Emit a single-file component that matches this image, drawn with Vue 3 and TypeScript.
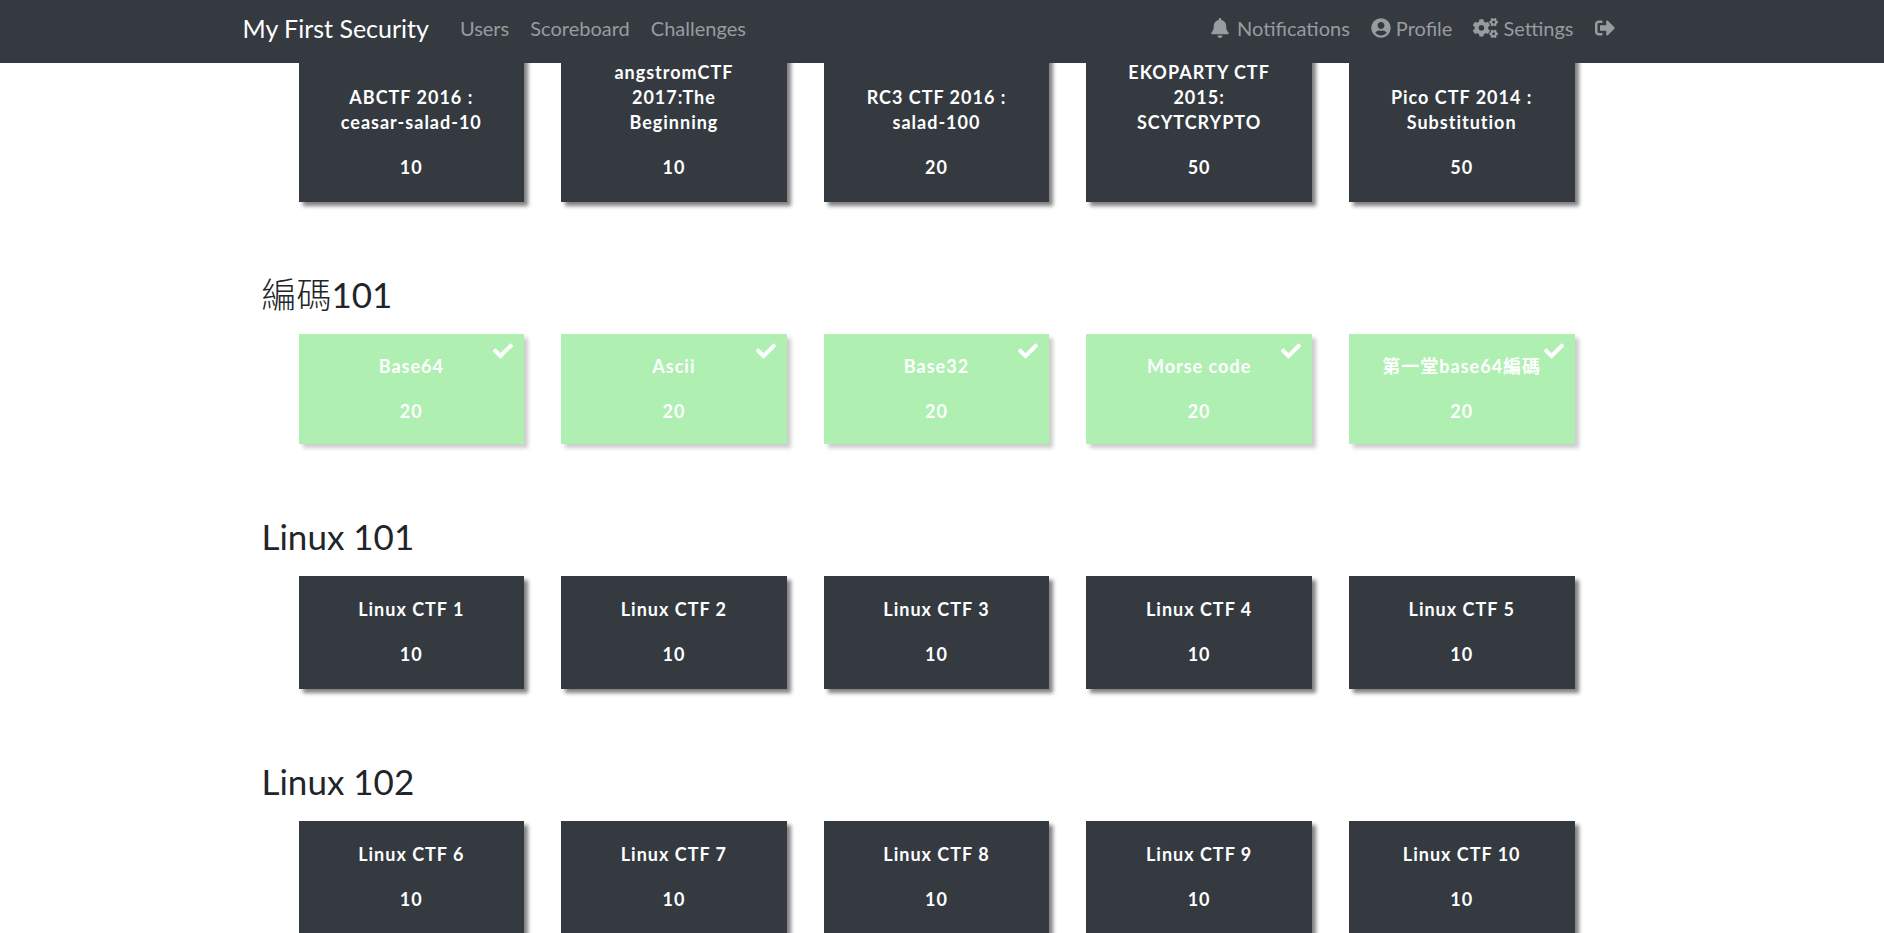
<script setup lang="ts">
interface Challenge {
  name: string
  value: number
  solved?: boolean
}

interface Category {
  cjk?: string
  title: string
  challenges: Challenge[]
}

const icons = {
  bell: 'M224 512c35.32 0 63.97-28.65 63.97-64H160.03c0 35.35 28.65 64 63.97 64zm215.39-149.71c-19.32-20.76-55.47-51.99-55.47-154.29 0-77.7-54.48-139.9-127.94-155.16V32c0-17.67-14.32-32-31.98-32s-31.98 14.33-31.98 32v20.84C118.56 68.1 64.08 130.3 64.08 208c0 102.3-36.15 133.53-55.47 154.29-6 6.45-8.66 14.16-8.61 21.71.11 16.4 12.98 32 32.1 32h383.8c19.12 0 32-15.6 32.1-32 .05-7.55-2.61-15.27-8.61-21.71z',
  user: 'M248 8C111 8 0 119 0 256s111 248 248 248 248-111 248-248S385 8 248 8zm0 96c48.6 0 88 39.4 88 88s-39.4 88-88 88-88-39.4-88-88 39.4-88 88-88zm0 344c-58.7 0-111.3-26.6-146.5-68.2 18.8-35.4 55.6-59.8 98.5-59.8 2.4 0 4.8.4 7.1 1.1 13 4.2 26.6 6.9 40.9 6.9 14.3 0 28-2.7 40.9-6.9 2.3-.7 4.7-1.1 7.1-1.1 42.9 0 79.7 24.4 98.5 59.8C359.3 421.4 306.7 448 248 448z',
  cogs: 'M512.1 191l-8.2 14.3c-3 5.3-9.4 7.5-15.1 5.4-11.8-4.4-22.6-10.7-32.1-18.6-4.6-3.8-5.8-10.5-2.8-15.7l8.2-14.3c-6.9-8-12.3-17.3-15.9-27.4h-16.5c-6 0-11.2-4.3-12.2-10.3-2-12-2.1-24.6 0-37.1 1-6 6.2-10.4 12.2-10.4h16.5c3.6-10.1 9-19.4 15.9-27.4l-8.2-14.3c-3-5.2-1.9-11.9 2.8-15.7 9.5-7.9 20.4-14.2 32.1-18.6 5.7-2.1 12.1.1 15.1 5.4l8.2 14.3c10.5-1.9 21.2-1.9 31.7 0L552 6.3c3-5.3 9.4-7.5 15.1-5.4 11.8 4.4 22.6 10.7 32.1 18.6 4.6 3.8 5.8 10.5 2.8 15.7l-8.2 14.3c6.9 8 12.3 17.3 15.9 27.4h16.5c6 0 11.2 4.3 12.2 10.3 2 12 2.1 24.6 0 37.1-1 6-6.2 10.4-12.2 10.4h-16.5c-3.6 10.1-9 19.4-15.9 27.4l8.2 14.3c3 5.2 1.9 11.9-2.8 15.7-9.5 7.9-20.4 14.2-32.1 18.6-5.7 2.1-12.1-.1-15.1-5.4l-8.2-14.3c-10.4 1.9-21.2 1.9-31.7 0zm-10.5-58.8c38.5 29.6 82.4-14.3 52.8-52.8-38.5-29.7-82.4 14.3-52.8 52.8zM386.3 286.1l33.7 16.8c10.1 5.8 14.5 18.1 10.5 29.1-8.9 24.2-26.4 46.4-42.6 65.8-7.4 8.9-20.2 11.1-30.3 5.3l-29.1-16.8c-16 13.7-34.6 24.6-54.9 31.7v33.6c0 11.6-8.3 21.6-19.7 23.6-24.6 4.2-50.4 4.4-75.9 0-11.5-2-20-11.9-20-23.6V418c-20.3-7.2-38.9-18-54.9-31.7L74 403c-10 5.8-22.9 3.6-30.3-5.3-16.2-19.4-33.3-41.6-42.2-65.7-4-10.9.4-23.2 10.5-29.1l33.3-16.8c-3.9-20.9-3.9-42.4 0-63.4L12 205.8c-10.1-5.8-14.6-18.1-10.5-29 8.9-24.2 26-46.4 42.2-65.8 7.4-8.9 20.2-11.1 30.3-5.3l29.1 16.8c16-13.7 34.6-24.6 54.9-31.7V57.1c0-11.5 8.2-21.5 19.6-23.5 24.6-4.2 50.5-4.4 76-.1 11.5 2 20 11.9 20 23.6v33.6c20.3 7.2 38.9 18 54.9 31.7l29.1-16.8c10-5.8 22.9-3.6 30.3 5.3 16.2 19.4 33.2 41.6 42.1 65.8 4 10.9.1 23.2-10 29.1l-33.7 16.8c3.9 21 3.9 42.5 0 63.5zm-117.6 21.1c59.2-77-28.7-164.9-105.7-105.7-59.2 77 28.7 164.9 105.7 105.7zm243.4 182.7l-8.2 14.3c-3 5.3-9.4 7.5-15.1 5.4-11.8-4.4-22.6-10.7-32.1-18.6-4.6-3.8-5.8-10.5-2.8-15.7l8.2-14.3c-6.9-8-12.3-17.3-15.9-27.4h-16.5c-6 0-11.2-4.3-12.2-10.3-2-12-2.1-24.6 0-37.1 1-6 6.2-10.4 12.2-10.4h16.5c3.6-10.1 9-19.4 15.9-27.4l-8.2-14.3c-3-5.2-1.9-11.9 2.8-15.7 9.5-7.9 20.4-14.2 32.1-18.6 5.7-2.1 12.1.1 15.1 5.4l8.2 14.3c10.5-1.9 21.2-1.9 31.7 0l8.2-14.3c3-5.3 9.4-7.5 15.1-5.4 11.8 4.4 22.6 10.7 32.1 18.6 4.6 3.8 5.8 10.5 2.8 15.7l-8.2 14.3c6.9 8 12.3 17.3 15.9 27.4h16.5c6 0 11.2 4.3 12.2 10.3 2 12 2.1 24.6 0 37.1-1 6-6.2 10.4-12.2 10.4h-16.5c-3.6 10.1-9 19.4-15.9 27.4l8.2 14.3c3 5.2 1.9 11.9-2.8 15.7-9.5 7.9-20.4 14.2-32.1 18.6-5.7 2.1-12.1-.1-15.1-5.4l-8.2-14.3c-10.4 1.9-21.2 1.9-31.7 0zM501.6 431c38.5 29.6 82.4-14.3 52.8-52.8-38.5-29.6-82.4 14.3-52.8 52.8z',
  signOut: 'M497 273L329 441c-15 15-41 4.5-41-17v-96H152c-13.3 0-24-10.7-24-24v-96c0-13.3 10.7-24 24-24h136V88c0-21.4 25.9-32 41-17l168 168c9.3 9.4 9.3 24.6 0 34zM192 436v-40c0-6.6-5.4-12-12-12H96c-17.7 0-32-14.3-32-32V160c0-17.7 14.3-32 32-32h84c6.6 0 12-5.4 12-12V76c0-6.6-5.4-12-12-12H96c-53 0-96 43-96 96v192c0 53 43 96 96 96h84c6.6 0 12-5.4 12-12z',
  check: 'M173.898 439.404l-166.4-166.4c-9.997-9.997-9.997-26.206 0-36.204l36.203-36.204c9.997-9.998 26.207-9.998 36.204 0L192 312.69 432.095 72.596c9.997-9.997 26.207-9.997 36.204 0l36.203 36.204c9.997 9.997 9.997 26.206 0 36.204l-294.4 294.401c-9.998 9.997-26.207 9.997-36.204-.001z',
}

const pages = ['Users', 'Scoreboard', 'Challenges']

const numbered = (from: number): Challenge[] =>
  Array.from({ length: 5 }, (_, i) => ({ name: `Linux CTF ${from + i}`, value: 10 }))

const crypto: Challenge[] = [
  { name: 'ABCTF 2016 : ceasar-salad-10', value: 10 },
  { name: 'angstromCTF 2017:The Beginning', value: 10 },
  { name: 'RC3 CTF 2016 : salad-100', value: 20 },
  { name: 'EKOPARTY CTF 2015: SCYTCRYPTO', value: 50 },
  { name: 'Pico CTF 2014 : Substitution', value: 50 },
]

const categories: Category[] = [
  {
    cjk: '編碼',
    title: '101',
    challenges: ['Base64', 'Ascii', 'Base32', 'Morse code', '第一堂base64編碼'].map((name) => ({
      name,
      value: 20,
      solved: true,
    })),
  },
  { title: 'Linux 101', challenges: numbered(1) },
  { title: 'Linux 102', challenges: numbered(6) },
]
</script>

<template>
  <div class="page">
    <header class="navbar">
      <nav class="container bar">
        <a class="brand" href="#">My First Security</a>
        <a v-for="page in pages" :key="page" class="link" href="#">{{ page }}</a>
        <span class="spacer"></span>
        <a class="link" href="#">
          <svg class="icon bell" viewBox="0 0 448 512" aria-hidden="true"><path :d="icons.bell" /></svg>Notifications
        </a>
        <a class="link" href="#">
          <svg class="icon user" viewBox="0 0 496 512" aria-hidden="true"><path :d="icons.user" /></svg>Profile
        </a>
        <a class="link" href="#">
          <svg class="icon cogs" viewBox="0 0 640 512" aria-hidden="true"><path :d="icons.cogs" /></svg>Settings
        </a>
        <a class="link" href="#" aria-label="Logout">
          <svg class="icon out" viewBox="0 0 512 512" aria-hidden="true"><path :d="icons.signOut" /></svg>
        </a>
      </nav>
    </header>

    <main class="container board">
      <section class="category">
        <div class="cards">
          <button v-for="c in crypto" :key="c.name" type="button" class="card">
            <span class="name">{{ c.name }}</span>
            <span>{{ c.value }}</span>
          </button>
        </div>
      </section>

      <section v-for="cat in categories" :key="cat.title" class="category">
        <h3 class="title"><span v-if="cat.cjk" class="cjk">{{ cat.cjk }}</span>{{ cat.title }}</h3>
        <div class="cards">
          <button
            v-for="c in cat.challenges"
            :key="c.name"
            type="button"
            class="card"
            :class="{ solved: c.solved }"
          >
            <svg v-if="c.solved" class="check" viewBox="0 0 512 512" aria-hidden="true">
              <path :d="icons.check" />
            </svg>
            <span class="name">{{ c.name }}</span>
            <span>{{ c.value }}</span>
          </button>
        </div>
      </section>
    </main>
  </div>
</template>

<style>
body {
  margin: 0;
  background: #fff;
}
</style>

<style scoped>
.page {
  box-sizing: border-box;
  height: 100vh;
  padding-right: 12px;
  overflow-y: auto;
  scrollbar-width: none;
  font-family: Lato, 'Noto Sans CJK TC', sans-serif;
  font-size: 20px;
  line-height: 30px;
  color: #212529;
}

.navbar {
  position: fixed;
  top: 0;
  left: 0;
  right: 0;
  z-index: 10;
  height: 63px;
  padding-right: 12px;
  background: #343a40;
}

.container {
  box-sizing: border-box;
  max-width: 1425px;
  margin: 0 auto;
}

.bar {
  display: flex;
  align-items: center;
  gap: 1px;
  height: 56px;
  padding: 0 24px 0 19px;
}

.brand {
  margin-right: 20px;
  font-size: 25px;
  color: #fff;
  text-decoration: none;
}

.link {
  display: flex;
  align-items: center;
  padding: 0 10px;
  color: #999c9f;
  text-decoration: none;
}

.spacer {
  flex: 1;
}

.icon {
  height: 20px;
  fill: currentColor;
}

.bell {
  width: 18px;
  margin-right: 8px;
}

.user {
  width: 20px;
  margin-right: 5px;
}

.cogs {
  width: 25px;
  margin-right: 5px;
}

.out {
  width: 20px;
}

.board {
  padding: 39px 31px 0 38px;
}

.category {
  margin-bottom: 71px;
}

.title {
  margin: 0 0 19px;
  font-size: 35px;
  font-weight: 400;
  line-height: 42px;
}

.cjk {
  font-weight: 300;
}

.cards {
  display: grid;
  grid-template-columns: repeat(5, 1fr);
  gap: 37px;
  padding: 0 43px 0 37px;
}

.card {
  position: relative;
  display: flex;
  flex-direction: column;
  justify-content: flex-end;
  gap: 20px;
  min-width: 0;
  margin: 0;
  padding: 21px 30px 22px;
  border: 0;
  border-radius: 0;
  background: #343a40;
  box-shadow: 4px 4px 4px #808080;
  color: #fff;
  font: inherit;
  font-size: 18px;
  font-weight: 700;
  line-height: 25px;
  letter-spacing: 1px;
  text-align: center;
}

.solved {
  padding: 20px 30px;
  background: #afefb2;
  box-shadow: 4px 4px 4px #ccc;
}

.check {
  position: absolute;
  top: 7px;
  right: 11px;
  width: 20px;
  height: 20px;
  fill: #fff;
}
</style>
